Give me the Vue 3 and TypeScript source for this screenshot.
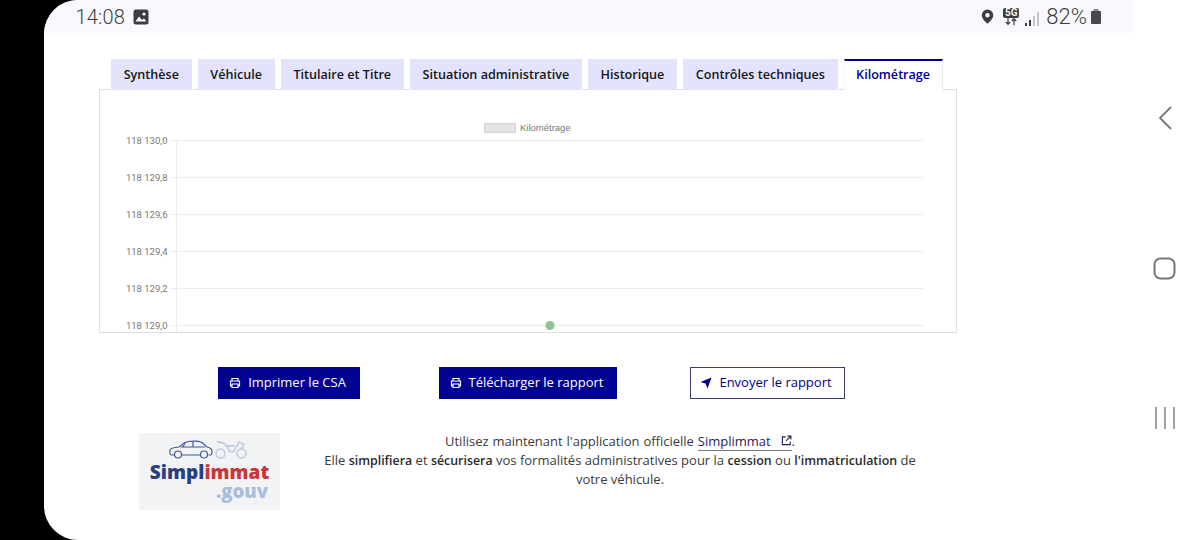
<script setup lang="ts">
const tabs: string[] = ['Synthèse', 'Véhicule', 'Titulaire et Titre', 'Situation administrative', 'Historique', 'Contrôles techniques']
const yLabels = [
  { t: '118 130,0', y: 50 },
  { t: '118 129,8', y: 87 },
  { t: '118 129,6', y: 124 },
  { t: '118 129,4', y: 161 },
  { t: '118 129,2', y: 198 },
  { t: '118 129,0', y: 235 },
]
</script>

<template>
  <div class="device">
    <div class="screen">
      <div class="main">
        <header class="status">
          <div class="status-left">
            <span class="clock">14:08</span>
            <svg class="pic" width="16" height="16" viewBox="0 0 16 16">
              <rect x="0.5" y="0.5" width="15" height="15" rx="2.5" fill="#3d3d3f" />
              <circle cx="11" cy="5" r="1.6" fill="#f8f8fd" />
              <path d="M2.5 12.5 L6 7.5 L9 11 L11 9.5 L13.5 12.5Z" fill="#f8f8fd" />
            </svg>
          </div>
          <div class="status-right">
            <svg class="s-loc" width="13" height="15" viewBox="0 0 14 16">
              <path fill-rule="evenodd" d="M7 .5A6.200 6.200 0 0 0 .8 6.700C.8 11 7 15.800 7 15.800s6.200-4.800 6.200-9.100A6.200 6.200 0 0 0 7 .5Zm0 3.800a2.400 2.400 0 1 1 0 4.800 2.400 2.400 0 0 1 0-4.800Z" fill="#3d3d3f" />
            </svg>
            <span class="net">
              <span class="net-5g">5G</span>
              <svg width="14" height="7" viewBox="0 0 14 7">
                <path d="M4 0v6M1.800 4 4 6.300 6.200 4M10 7V1M7.800 3 10 .7 12.200 3" fill="none" stroke="#3d3d3f" stroke-width="1.200" />
              </svg>
            </span>
            <svg class="signal" width="14" height="14" viewBox="0 0 14 14">
              <rect x="0" y="11" width="2" height="3" fill="#3d3d3f" />
              <rect x="4" y="8" width="2" height="6" fill="#3d3d3f" />
              <rect x="8" y="4" width="2" height="10" fill="#c4c4c6" />
              <rect x="12" y="0" width="2" height="14" fill="#c4c4c6" />
            </svg>
            <span class="pct">82%</span>
            <svg class="batt" width="12" height="15" viewBox="0 0 12 15">
              <rect x="3.500" y="0" width="5" height="2" fill="#8a8a8c" />
              <rect x="1" y="2" width="10" height="13" rx="1" fill="#48484a" />
            </svg>
          </div>
        </header>

        <section class="content">
          <nav class="tabs">
            <button v-for="t in tabs" :key="t" class="tab">{{ t }}</button>
            <button class="tab tab-active">Kilométrage</button>
          </nav>

          <div class="panel">
            <svg class="chart" width="856" height="242" viewBox="1 0 856 242">
              <rect x="385.500" y="33.500" width="31" height="9" fill="#e3e3e3" stroke="#d4d4d4" />
              <text x="421" y="41" class="legend">Kilométrage</text>
              <line x1="77.500" y1="50" x2="77.500" y2="242" stroke="#ececec" />
              <g v-for="l in yLabels" :key="l.t">
                <line x1="71" :y1="l.y + 0.5" x2="825" :y2="l.y + 0.5" stroke="#ececec" />
                <text x="68.500" :y="l.y + 4" text-anchor="end" class="ylabel">{{ l.t }}</text>
              </g>
              <circle cx="451" cy="235.500" r="4.500" fill="#8fc28f" />
            </svg>
          </div>

          <div class="actions">
            <button class="btn btn-fill btn-1">
              <svg width="12" height="12" viewBox="0 0 24 24" class="ico"><path d="M6 18H3V8h18v10h-3M6 8V3h12v5M6 14h12v7H6z" fill="none" stroke="#fff" stroke-width="2.400" /></svg>
              <span>Imprimer le CSA</span>
            </button>
            <button class="btn btn-fill btn-2">
              <svg width="12" height="12" viewBox="0 0 24 24" class="ico"><path d="M6 18H3V8h18v10h-3M6 8V3h12v5M6 14h12v7H6z" fill="none" stroke="#fff" stroke-width="2.400" /></svg>
              <span>Télécharger le rapport</span>
            </button>
            <button class="btn btn-line">
              <svg width="12" height="12" viewBox="0 0 24 24" class="ico"><path d="M1 10 23 1 15 23 11 13Z" fill="#000091" /></svg>
              <span>Envoyer le rapport</span>
            </button>
          </div>

          <div class="promo">
            <div class="logo">
              <svg class="vehicles" width="78" height="19" viewBox="0 0 78 19">
                <g fill="none" stroke="#41598f" stroke-width="1.200">
                  <path d="M5 15H2.500C.8 15 .6 12 1 10c.5-1.800 3-2.400 9-3l6-4.500C20 .8 29 .5 33 2.500L38 7c3 .6 5 1.500 5 4.500 0 2-.5 3.500-2 3.500h-1.500M13 15h18" />
                  <path d="M12 7h24M24 2v5M16 3l-2 4" />
                  <circle cx="9" cy="14.500" r="3.500" />
                  <circle cx="35" cy="14.500" r="3.500" />
                </g>
                <g fill="none" stroke="#c3d0e6" stroke-width="1.800">
                  <circle cx="51.500" cy="13.500" r="4.500" />
                  <circle cx="72.500" cy="13.500" r="4.500" />
                  <path d="M48 2c4 0 8 1.500 10 4l2.500 5.500h4L68 6l2-4 5 2.500-3 5" />
                  <path d="M56 6h10" />
                </g>
              </svg>
              <div class="brand"><span class="b-blue">Simpl</span><span class="b-red">immat</span></div>
              <div class="gouv">.gouv</div>
            </div>
            <div class="promo-text">
              <p class="lead">Utilisez maintenant l'application officielle <a class="link">Simplimmat
                <svg width="11" height="11" viewBox="0 0 12 12" class="ext"><path d="M5 2H1.500v8.500H10V7M7 1.200h3.800V5M10.500 1.500 5.500 6.500" fill="none" stroke="#1e1e5c" stroke-width="1.200" /></svg></a>.</p>
              <p>Elle <b>simplifiera</b> et <b>sécurisera</b> vos formalités administratives pour la <b>cession</b> ou <b>l'immatriculation</b> de<br />votre véhicule.</p>
            </div>
          </div>
        </section>
      </div>

      <aside class="softkeys">
        <svg width="14" height="24" viewBox="0 0 14 24"><path d="M13 1 2 12l11 11" fill="none" stroke="#77777a" stroke-width="1.800" /></svg>
        <svg width="23" height="23" viewBox="0 0 23 23"><rect x="1.500" y="1.500" width="20" height="20" rx="6" fill="none" stroke="#77777a" stroke-width="2" /></svg>
        <svg width="22" height="22" viewBox="0 0 22 22"><path d="M2 0v22M11 0v22M20 0v22" fill="none" stroke="#8a8a8c" stroke-width="1.600" /></svg>
      </aside>
    </div>
  </div>
</template>

<style>
html, body { margin: 0; background: #000; }
</style>

<style scoped>
.device {
  width: 1200px;
  height: 540px;
  background: #000;
  padding-left: 44px;
  box-sizing: border-box;
  overflow: hidden;
  font-family: "Open Sans", "Noto Sans", sans-serif;
}
.screen {
  width: 1156px;
  height: 540px;
  background: #fff;
  border-radius: 34px 0 0 34px;
  overflow: hidden;
  display: flex;
}
.main { width: 1089px; flex: none; }
.status {
  height: 33px;
  background: #f8f8fd;
  display: flex;
  align-items: center;
  justify-content: space-between;
  padding: 0 31px 0 31.500px;
  color: #3d3d3f;
  font-family: Roboto, sans-serif;
}
.status-left, .status-right { display: flex; align-items: center; }
.clock { font-size: 20px; margin-right: 8px; font-weight: 300; letter-spacing: .2px; }
.net { display: flex; flex-direction: column; align-items: center; margin-left: 9px; }
.net-5g {
  background: #3d3d3f;
  color: #f8f8fd;
  font-size: 10px;
  font-weight: 700;
  line-height: 10px;
  width: 16px;
  text-align: center;
  border-radius: 2px;
}
.signal { margin-left: 6px; margin-top: 4px; }
.pct { font-size: 22px; font-weight: 300; margin-left: 7px; margin-right: 3px; }
.content { padding: 26px 0 0 55px; color: #1e1e1e; }
.tabs { display: flex; align-items: flex-start; gap: 6px; padding-left: 12px; height: 31px; }
.tab {
  background: #e3e3fd;
  border: 0;
  padding: 0 12.700px 1px;
  font: 600 12.600px "Open Sans", sans-serif;
  color: #161616;
  height: 31px;
  white-space: nowrap;
}
.tab-active {
  background: #fff;
  color: #000091;
  border-top: 2px solid #000091;
  border-right: 1px solid #ececec;
  border-left: 1px solid #f4f4f4;
  padding: 0 11.500px 3px;
  height: 32px;
  position: relative;
}
.panel {
  width: 858px;
  height: 244px;
  margin-top: -1px;
  box-sizing: border-box;
  border: 1px solid #e0e0e0;
}
.chart { display: block; }
.legend { font: 9.500px "Liberation Sans", sans-serif; fill: #777; }
.ylabel { font: 9.500px Roboto, sans-serif; fill: #777; }
.actions { display: flex; height: 32px; margin-top: 34px; padding-left: 119px; }
.btn {
  height: 32px;
  box-sizing: border-box;
  font: 500 13px "Open Sans", sans-serif;
  display: flex;
  align-items: center;
  justify-content: center;
  gap: 7px;
  white-space: nowrap;
  padding: 0 3px 2px 0;
}
.ico { flex: none; margin-top: 2px; }
.btn-fill { background: #000091; color: #fff; border: 0; }
.btn-1 { width: 142px; margin-right: 79px; }
.btn-2 { width: 178px; margin-right: 73px; }
.btn-line { width: 155px; background: #fff; color: #000091; border: 1px solid #3a3a80; }
.promo { display: flex; margin-top: 34px; padding-left: 40px; }
.logo {
  width: 141px;
  height: 77px;
  background: #f2f3f5;
  display: flex;
  flex-direction: column;
  align-items: center;
  padding-top: 7px;
  box-sizing: border-box;
  flex: none;
}
.vehicles { display: block; align-self: flex-start; margin-left: 30px; }
.brand { font: 800 19px/20px "Open Sans", sans-serif; margin-top: 3px; }
.b-blue { color: #2a3f80; }
.b-red { color: #c8373c; }
.gouv { font: 800 18.500px/17px "Open Sans", sans-serif; color: #a9bdde; align-self: flex-end; margin-right: 12px; }
.promo-text {
  width: 618px;
  margin-left: 31px;
  margin-top: -1px;
  text-align: center;
  font-size: 13px;
  line-height: 18.500px;
  color: #3a3a3a;
}
.promo-text p { margin: 0; }
.promo-text .lead { word-spacing: .5px; }
.promo-text b { font-weight: 600; font-size: 12.400px; color: #2a2a2a; }
.link { color: #1e1e5c; border-bottom: 1px solid #777; }
.ext { margin-left: 6px; }
.softkeys {
  flex: 1;
  display: flex;
  flex-direction: column;
  align-items: center;
  padding: 106px 4px 0 0;
  gap: 127px;
}
</style>
